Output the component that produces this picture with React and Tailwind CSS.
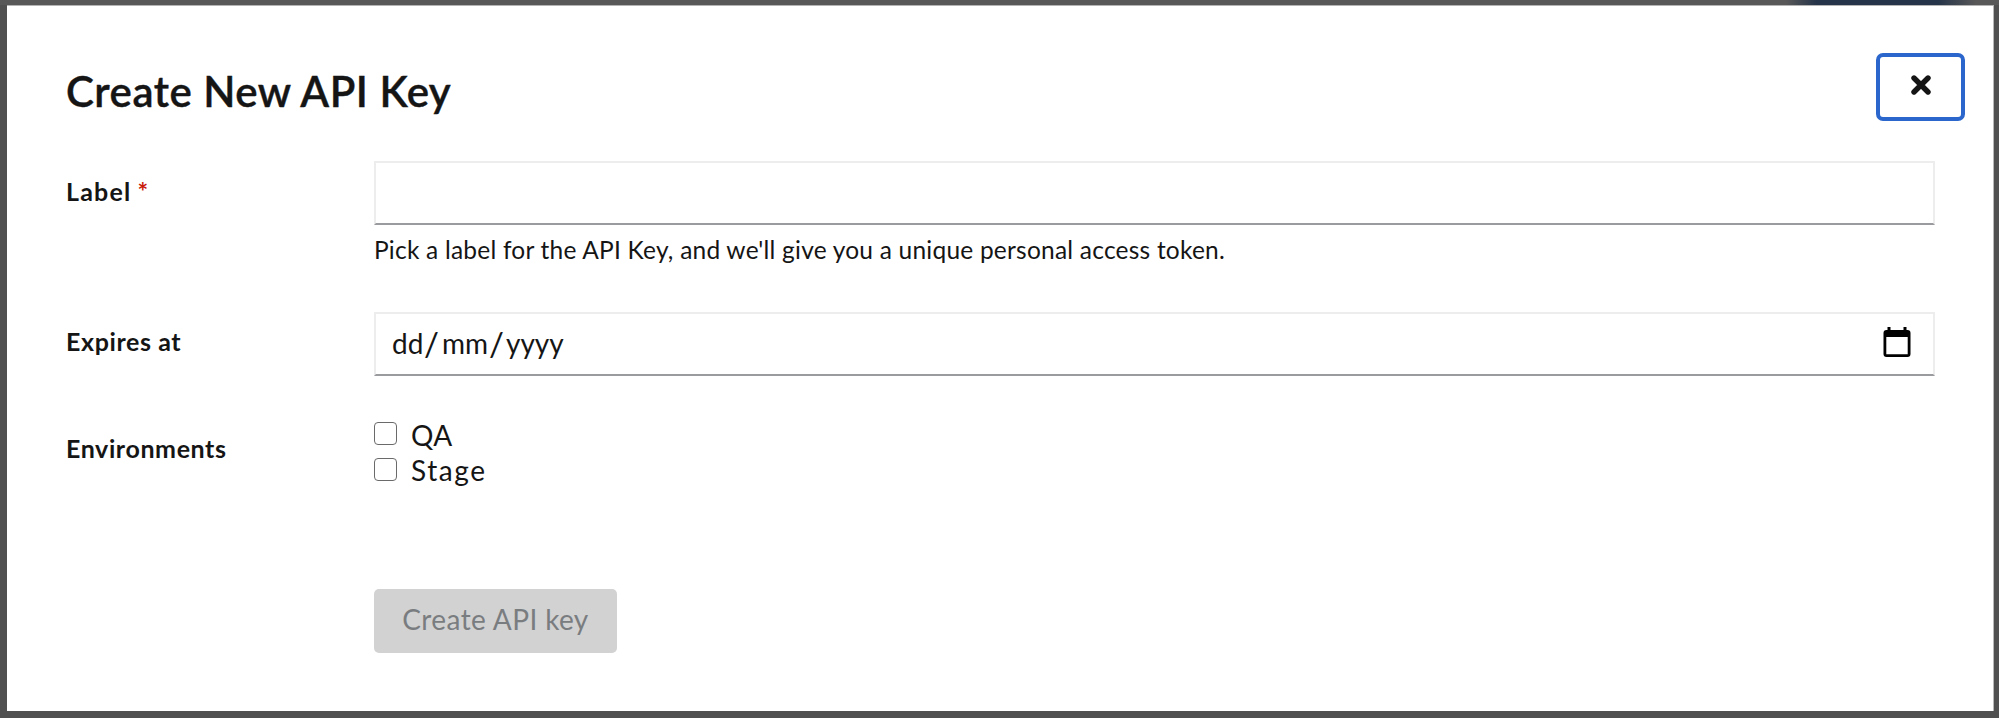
function CloseIcon() {
  return (
    <svg viewBox="0 0 20 20" className="block size-5" aria-hidden="true">
      <path d="M3 3 17 17M17 3 3 17" fill="none" stroke="#151515" strokeWidth="5.4" strokeLinecap="round" />
    </svg>
  );
}

function CalendarIcon() {
  return (
    <svg viewBox="0 0 28 31" className="mb-[3px] block h-[31px] w-7" aria-hidden="true">
      <path
        fillRule="evenodd"
        fill="#000"
        d="M4.5 0H7.5V3H20.5V0H23.5V3H24.5A3 3 0 0 1 27.5 6V27A3 3 0 0 1 24.5 30H3.5A3 3 0 0 1 .5 27V6A3 3 0 0 1 3.5 3H4.5ZM3.3 10V27.2H24.7V10Z"
      />
    </svg>
  );
}

function Field({ label, required, labelClass, children }) {
  return (
    <div className="grid grid-cols-[308px_1fr]">
      <div className={`text-[25px] leading-9 font-bold ${labelClass}`}>
        {label}
        {required && <span className="ml-[6px] font-bold text-[#c9190b]">*</span>}
      </div>
      <div>{children}</div>
    </div>
  );
}

function Checkbox({ label, textClass }) {
  return (
    <label className="flex h-9 items-start text-[28px] leading-9">
      <input type="checkbox" className="mt-[6px] mr-[14px] size-[23px] appearance-none rounded-[4px] border-[1.5px] border-[#6a6a6a] bg-white" />
      <span className={textClass}>{label}</span>
    </label>
  );
}

export default function App() {
  return (
    <div className="flex h-[719px] w-[1999px] flex-col bg-white font-['Lato',sans-serif] text-[#151515]">
      <div className="flex h-[718px] flex-col bg-[#505050]">
        <div className="flex h-[5px] shrink-0 bg-[#585858]">
          <div className="ml-[1786px] h-[5px] w-[190px] bg-[linear-gradient(to_right,#585858,#263449_16%,#263449_80%,#585858)]" />
        </div>
        <div className="ml-[7px] flex h-[706px] w-[1987px] flex-col border-t border-r border-t-[#b4b4b4] border-r-[#b8b8b8] bg-white pt-[47px]">
          <header className="flex h-[68px] items-start justify-between pr-[28px] pl-[59px]">
            <h1 className="mt-[13px] text-[42px] leading-[50px] font-semibold tracking-[0.5px] [-webkit-text-stroke:0.4px_#151515]">
              Create New API Key
            </h1>
            <button aria-label="Close" className="flex h-[68px] w-[89px] items-center justify-center rounded-[7px] border-[4px] border-[#2b66cc] pb-[4px]">
              <CloseIcon />
            </button>
          </header>
          <form className="mt-10 flex flex-col pr-[58px] pl-[59px]">
            <div className="h-[151px]">
              <Field label="Label" required labelClass="mt-[12px] tracking-[1.2px]">
                <input className="block h-16 w-full border-2 border-[#ededed] border-b-[#9a9b9e] px-4 outline-none" />
                <p className="mt-[7px] text-[24.5px] leading-9 tracking-[0.22px]">
                  Pick a label for the API Key, and we'll give you a unique personal access token.
                </p>
              </Field>
            </div>
            <div className="h-[104px]">
              <Field label="Expires at" labelClass="mt-[11px] tracking-[0.6px]">
                <div className="flex h-16 items-center justify-between border-2 border-[#ededed] border-b-[#9a9b9e] pr-[22px] pl-4 text-[28px] leading-9">
                  <div className="mb-[3px] flex">
                    <span className="w-[32px]">dd</span>
                    <span className="w-[18px] text-[33px]">/</span>
                    <span className="w-[47px]">mm</span>
                    <span className="w-[17px] text-[33px]">/</span>
                    <span>yyyy</span>
                  </div>
                  <CalendarIcon />
                </div>
              </Field>
            </div>
            <div className="h-[173px]">
              <Field label="Environments" labelClass="mt-[14px] tracking-[0.6px]">
                <Checkbox label="QA" textClass="pt-px tracking-[0.3px]" />
                <Checkbox label="Stage" textClass="tracking-[1.6px]" />
              </Field>
            </div>
            <button
              type="button"
              disabled
              className="ml-[308px] flex h-16 w-[243px] items-center justify-center rounded-[5px] bg-[#d2d2d2] pb-[4px] text-[28px] leading-9 tracking-[0.4px] text-[#7a7d80]"
            >
              Create API key
            </button>
          </form>
        </div>
      </div>
    </div>
  );
}
